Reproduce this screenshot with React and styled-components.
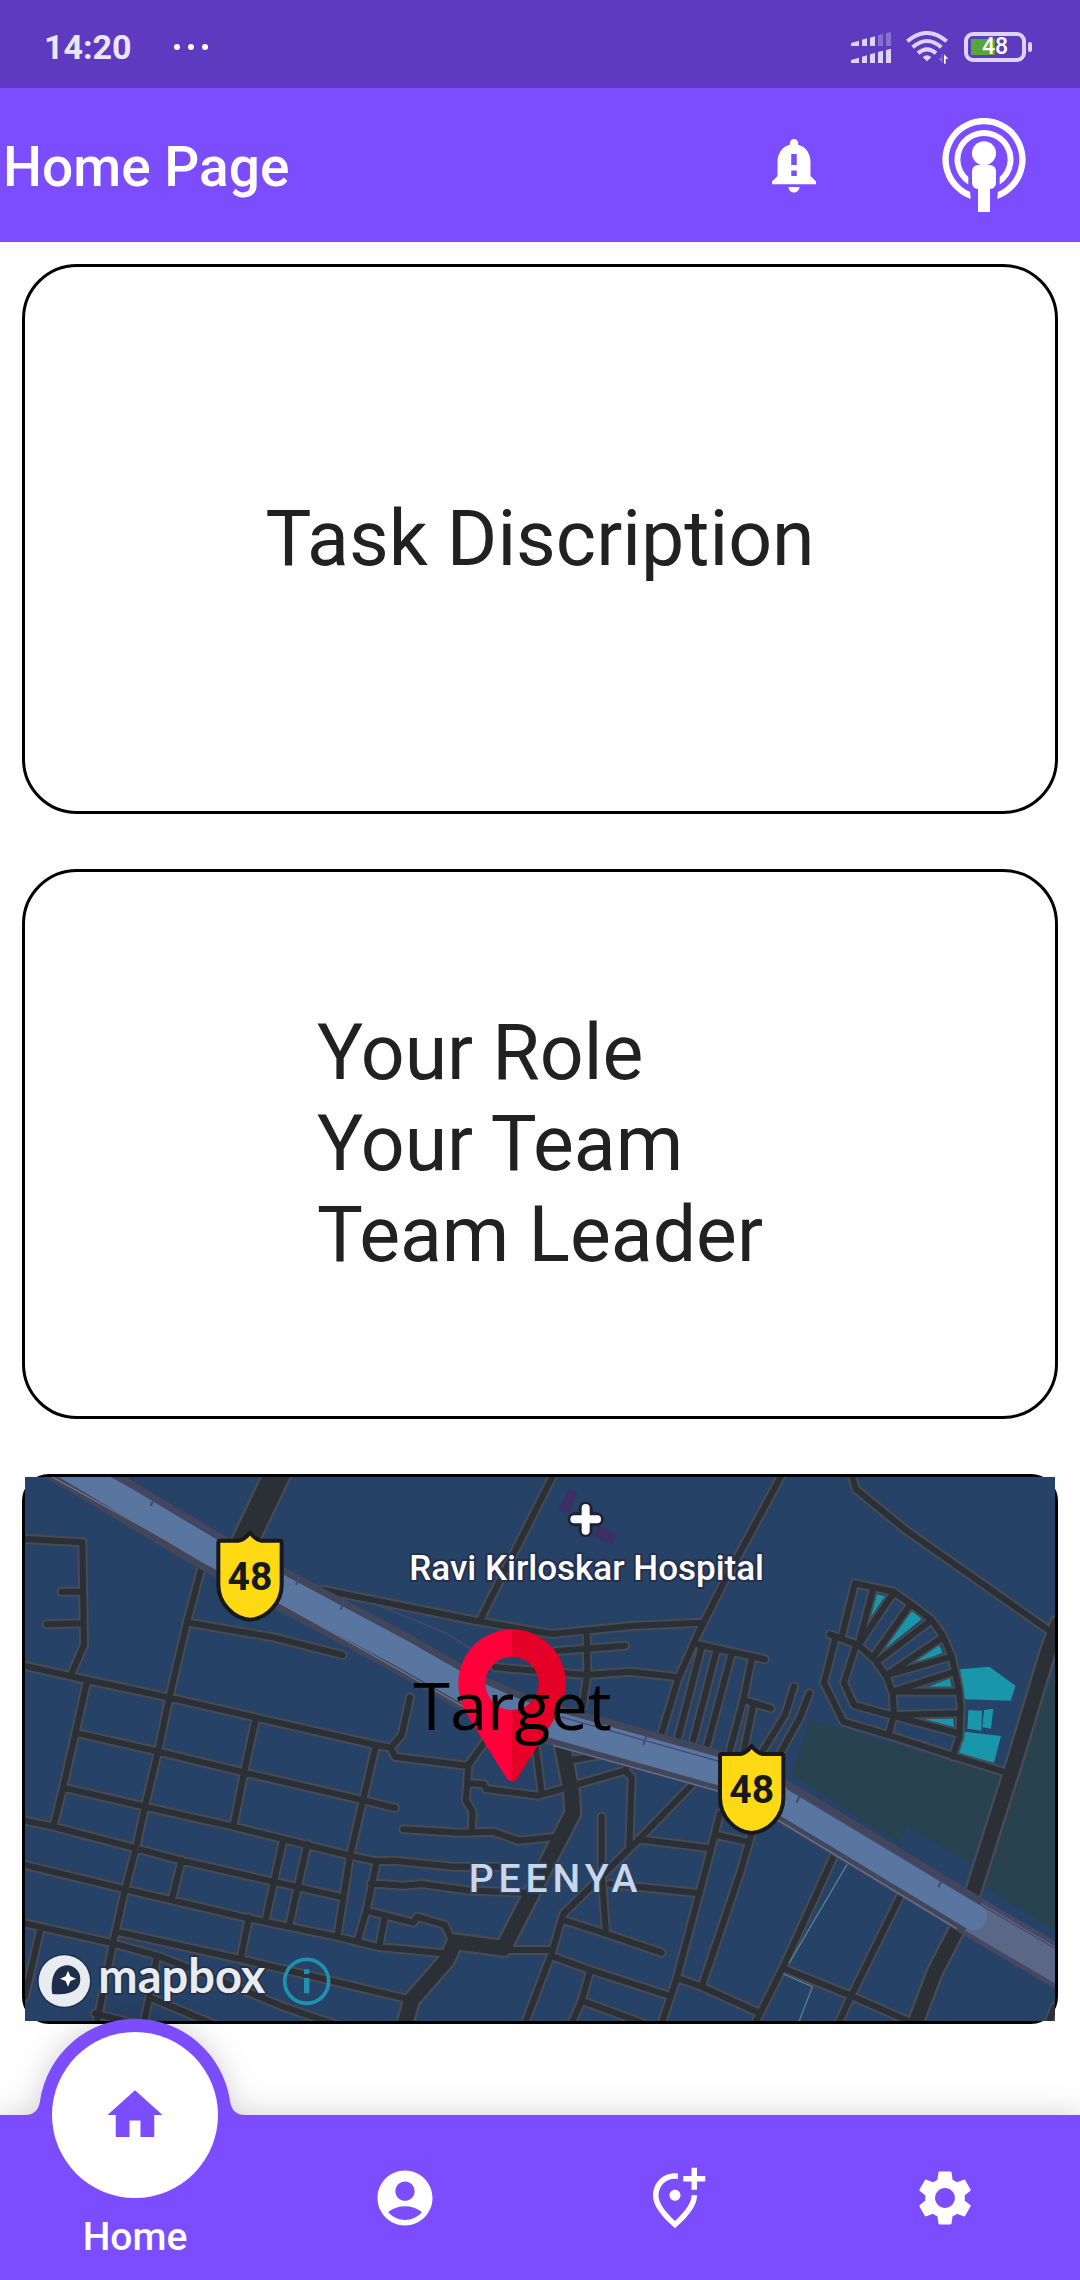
import React from "react";
import styled, { createGlobalStyle } from "styled-components";
import {
  MdHome,
  MdAccountCircle,
  MdOutlineAddLocationAlt,
  MdSettings,
  MdNotificationImportant,
} from "react-icons/md";

const PURPLE = "#7c4dff";

const GlobalStyle = createGlobalStyle`
  * { box-sizing: border-box; }
  body {
    margin: 0;
    background: #fefefe;
    font-family: Roboto, "Noto Sans", sans-serif;
    color: #212121;
  }
`;

const Screen = styled.div`
  min-height: 100vh;
  display: flex;
  flex-direction: column;
`;

const StatusBar = styled.div`
  height: 88px;
  padding: 6px 48px 0 44px;
  display: flex;
  align-items: center;
  justify-content: space-between;
  background: #5d3abf;
  color: #ece6fb;
`;

const StatusGroup = styled.div`
  display: flex;
  align-items: center;
  gap: ${(p) => p.$gap}px;
`;

const Clock = styled.span`
  font-size: 34px;
  font-weight: 700;
  line-height: 40px;
`;

const Battery = styled.div`
  display: flex;
  align-items: center;
  gap: 2px;
`;

const BatteryBody = styled.div`
  width: 62px;
  height: 30px;
  border: 4px solid #ddd3f5;
  border-radius: 9px;
  display: flex;
  align-items: center;
  justify-content: center;
  font-size: 23px;
  font-weight: 500;
  line-height: 22px;
  color: #fff;
  background: linear-gradient(#57a639, #57a639) 3px 3px / 24px 16px no-repeat;
`;

const BatteryTip = styled.div`
  width: 4px;
  height: 10px;
  border-radius: 2px;
  background: #ddd3f5;
`;

const AppBar = styled.header`
  height: 154px;
  padding: 0 54px 0 3px;
  display: flex;
  align-items: center;
  justify-content: space-between;
  background: ${PURPLE};
  color: #fff;
`;

const Title = styled.h1`
  margin: 0;
  padding-top: 4px;
  font-size: 55px;
  font-weight: 500;
  line-height: 64px;
`;

const Actions = styled.div`
  display: flex;
  align-items: center;
  gap: 115px;
`;

const IconButton = styled.button`
  display: flex;
  padding: 0;
  border: 0;
  background: none;
  color: inherit;
`;

const Main = styled.main`
  display: flex;
  flex-direction: column;
  gap: 55px;
  padding: 22px;
`;

const Card = styled.section`
  height: 550px;
  border: 3px solid #000;
  border-radius: ${(p) => p.$radius || 55}px;
  display: flex;
  align-items: center;
  justify-content: center;
`;

const CardText = styled.div`
  font-size: 77px;
  line-height: 91px;
`;

const MapSvg = styled.svg`
  display: block;
  width: 100%;
  height: 100%;
`;

const MapLabel = styled.text`
  paint-order: stroke;
  stroke-linejoin: round;
`;

const NavBar = styled.nav`
  margin-top: auto;
  height: 165px;
  display: grid;
  grid-template-columns: repeat(4, 1fr);
  background: ${PURPLE};
  filter: drop-shadow(0 0 14px rgba(0, 0, 0, 0.18));
`;

const NavItem = styled.a`
  position: relative;
  display: flex;
  flex-direction: column;
  align-items: center;
  justify-content: ${(p) => (p.$active ? "flex-start" : "center")};
  color: #fff;
  font-size: 39px;
  font-weight: 500;
  line-height: 46px;
  text-decoration: none;
`;

const Bump = styled.svg`
  position: absolute;
  bottom: 100%;
  left: 50%;
  transform: translateX(-50%);
`;

const ActiveDisc = styled.span`
  position: relative;
  width: 166px;
  height: 166px;
  margin: -83px 0 16px;
  flex: none;
  display: flex;
  align-items: center;
  justify-content: center;
  border-radius: 50%;
  background: #fff;
  color: ${PURPLE};
`;

function SignalIcon() {
  return (
    <svg width="40" height="31" viewBox="0 0 120 93" fill="#ddd3f5" aria-hidden="true">
      <path d="M0 33l24-7v16H0zM33 23l15-4v23H33zM57 17l15-4v29H57z" />
      <path d="M81 10l15-4v36H81zM105 4l15-4v42h-15z" opacity=".35" />
      <path d="M0 84l24-7v16H0zM33 74l15-4v23H33zM57 67l15-4v30H57zM81 60l15-4v37H81zM105 54l15-4v43h-15z" />
    </svg>
  );
}

function WifiIcon() {
  return (
    <svg width="43" height="33" viewBox="0 0 129 99" fill="none" aria-hidden="true">
      <g stroke="#ddd3f5" strokeWidth="12">
        <path d="M4 31Q63-19 122 31" />
        <path d="M20 49Q63 11 106 49" />
        <path d="M36 67Q63 43 90 67" />
      </g>
      <path d="M63 91L50 79Q63 67 76 79z" fill="#ddd3f5" />
      <path d="M106 70h4v26l-14-14h10z" fill="#ddd3f5" opacity=".35" />
      <path d="M114 98V70l13 13h-8v15z" fill="#fff" />
    </svg>
  );
}

function PodcastIcon() {
  return (
    <svg width="84" height="94" viewBox="-42 -41.5 84 94" fill="#fff" aria-hidden="true">
      <path d="M-13.3 39.4A41.6 41.6 0 1 1 13.3 39.4L13.9 32.4A35.3 35.3 0 1 0-13.9 32.4Z" />
      <path d="M-15.7 25A29.5 29.5 0 1 1 15.7 25V17.6A23.6 23.6 0 1 0-15.7 17.6Z" />
      <circle cy="-6.3" r="12" />
      <rect x="-12" y="5.5" width="24" height="24" rx="6" />
      <rect x="-6" y="20" width="12" height="32.5" />
    </svg>
  );
}

const streets = [
  "M75 237L247 247L252 555L215 640M185 395H247M140 493L250 490",
  "M75 618L262 660L508 713L768 773L1128 855L1172 863L1205 825L1230 712M1172 863L1185 890L1405 918",
  "M262 660L190 980L160 1100M608 310L560 490L508 713L475 870L435 1040L408 1165L375 1290L340 1445L290 1690",
  "M565 488L820 532L1028 585M235 820L475 875L735 938L1095 1022L1185 1044M768 773L740 900L700 1100",
  "M190 983L435 1040L700 1100L850 1137L920 1155L1050 1187L1130 1204L1185 1202L1360 1220L1520 1220",
  "M75 1082L160 1100L408 1165L545 1202L820 1265L1030 1312",
  "M75 1215L375 1288L520 1322L745 1375L1010 1430L1130 1460L1330 1480",
  "M75 1390L340 1450L480 1490L620 1545L850 1640L1010 1695M350 1415L720 1497L1215 1615",
  "M545 1200L515 1320M747 1372L722 1495M850 1137L797 1380M922 1152L868 1395M1128 855L1050 1187L1012 1430",
  "M1130 1204L1100 1350L1073 1442M1113 1270L1210 1277L1265 1272L1410 1292L1580 1298",
  "M1100 1352L1240 1388L1252 1370L1335 1395L1355 1440M1155 1370L1138 1458",
  "M122 1402L75 1610M470 1495L432 1690M285 1660L400 1690M448 1612L660 1700",
  "M1210 1108L1380 1118L1480 1115L1555 1142L1670 1130",
  "M1455 845L1405 915L1398 1022L1418 1055L1415 1115",
  "M1405 970L1452 973L1458 987L1615 1007L1690 985L1875 932L1890 900M1605 840L1625 1000M1715 900L1840 880",
  "M1875 932L1895 952L1888 1160M2090 960L1915 1140L1690 1362L1655 1480L1575 1690",
  "M1805 1070V1240L1818 1420M1915 1138L2130 1165M1830 1272L2100 1300",
  "M1690 1380L1815 1420L1985 1478M1500 1470H1655M1660 1490L1770 1530L2010 1608",
  "M1770 1535L1745 1622L1715 1690M1745 1622L1930 1690M2160 1060L2130 1180L2030 1555L1985 1690",
  "M2150 1125L2240 1145M2255 1120L2220 1240L2105 1580M2035 1555L2105 1580L2280 1660",
  "M2505 1180L2350 1520L2265 1690M2705 1300L2555 1605L2515 1690M2350 1525L2555 1608L2740 1690M3165 1640L3145 1690",
  "M970 390L1080 412L1430 483L1655 522L1895 498L2105 488M1660 45L1440 480",
  "M2345 45L2165 380L2090 530L2035 655L1985 820M1760 520L1762 640L1748 740",
  "M1670 573L1875 557M1485 622L1760 645L1890 635L2035 652M2090 552L2295 598",
  "M2105 560L2035 830M2150 570L2080 840M2195 580L2122 855M2255 598L2230 720L2190 870",
  "M2232 720L2312 745M2260 735L2230 880M2382 680L2355 765L2290 870M2428 700L2400 772L2335 890",
  "M2555 45L2568 88L2720 212L3145 510",
  "M2525 530L2565 370L2680 395L2730 430L2795 480L2830 530L2855 590L2875 680L2882 740L2878 830L2858 890",
  "M2490 523L2575 555L2625 600L2660 650L2678 700L2682 765L2665 825",
  "M2505 540L2472 668L2530 785L2665 825L2860 888L3010 935",
  "M2565 565L2532 668L2562 735L2682 768L2875 820",
  "M2620 385L2575 555L2680 400M2730 435L2620 590M2795 480L2630 605M2830 530L2660 645L2855 590M2865 635L2678 695H2875M2880 760L2682 765",
];

const majorRoads = [
  { d: "M1680 820L1715 1000L1718 1060L1510 1465L1365 1445L1340 1500L1235 1620L1212 1700", w: 44 },
  { d: "M3175 490L3145 570L3045 900L2915 1310", w: 42 },
  { d: "M2885 1380L2805 1535L2742 1700", w: 42 },
  { d: "M835 35L725 265", w: 74 },
];

const highway =
  "M150 -12L258 52L620 268L1200 577L1380 680Q1520 755 1680 800L2160 935Q2260 965 2350 1025L2920 1370";

const SHIELD =
  "M5 28H62Q80 24 95 4Q110 24 128 28H185Q190 28 190 34V160C190 215 145 262 95 265C45 262 0 215 0 160V34Q0 28 5 28Z";

function Shield({ x, y }) {
  return (
    <g transform={`translate(${x} ${y})`}>
      <path d={SHIELD} fill="#ffd914" stroke="#17191d" strokeWidth="12" strokeLinejoin="round" />
      <text x="95" y="175" textAnchor="middle" fontSize="117" fontWeight="700" fill="#17191d">
        48
      </text>
    </g>
  );
}

/* Map units are a third of a pixel at the widest layout. */
function TargetMap() {
  return (
    <MapSvg viewBox="75 51 3090 1632" preserveAspectRatio="xMidYMid slice" role="img" aria-label="Target map">
      <rect x="0" y="0" width="3300" height="1800" fill="#274267" />
      <g fill="#29424f">
        <path d="M2430 778L3010 950L2910 1210L2722 1102L2697 1150L2375 945Z" />
        <path d="M3175 600L3060 900L2945 1278L3175 1416Z" />
      </g>
      <path
        d="M1705 88L1675 150L1705 165L1732 100ZM1795 195L1852 225L1835 255L1775 225Z"
        fill="#3b2f64"
      />
      <g fill="#1996a9">
        <path d="M2630 403L2656 408L2610 475ZM2735 450L2765 478L2635 582ZM2815 550L2828 578L2735 615ZM2850 655L2855 680L2785 680ZM2860 775L2862 802L2770 778Z" />
        <path d="M2880 628L2968 620L3047 677L3032 722L2893 718ZM2905 750L2946 752L2944 812L2902 806ZM2952 750L2980 746L2973 806L2947 802ZM2893 815L3003 828L2982 908L2873 880Z" />
      </g>
      <g fill="none" strokeLinejoin="round" strokeLinecap="round">
        <path d={streets.join("")} stroke="#474b53" strokeWidth="30" />
        {majorRoads.map((r) => (
          <path key={r.d} d={r.d} stroke="#474b53" strokeWidth={r.w + 14} />
        ))}
        <path d={streets.join("")} stroke="#2b2f36" strokeWidth="18" />
        {majorRoads.map((r) => (
          <path key={r.d} d={r.d} stroke="#2b2f36" strokeWidth={r.w} />
        ))}
      </g>
      <path d="M2543 1210L2367 1510M2350 1542L2437 1580L2395 1690" fill="none" stroke="#55808f" strokeWidth="4" />
      <g fill="none">
        <path d="M2905 1362L3200 1535" stroke="#454860" strokeWidth="124" />
        <path d="M2905 1362L3200 1535" stroke="#5b6786" strokeWidth="96" />
        <path d={highway} stroke="#42465a" strokeWidth="124" strokeLinejoin="round" />
        <path d={highway} stroke="#5876a0" strokeWidth="82" strokeLinejoin="round" strokeLinecap="round" />
        <path d="M110 25L640 318L1200 631L1400 746M1660 856L2180 1000L2340 1084L2870 1406" stroke="#66738f" strokeWidth="4" />
        <path d="M330 48L665 230M1680 770L2160 905M2360 985L2900 1310L3165 1465M1120 430L1340 520L1480 610" stroke="#454872" strokeWidth="4" />
        <path d="M465 110L452 138M900 345L888 375M1035 415L1022 450M1940 825L1930 855M2400 1005L2390 1028M2825 1260L2815 1282" stroke="#454872" strokeWidth="6" />
      </g>
      <Shield x={655} y={214} />
      <Shield x={2160} y={854} />
      <path
        d="M1757 146V210M1724 178H1790"
        stroke="#1d2233"
        strokeWidth="42"
        strokeLinecap="round"
      />
      <path d="M1757 144V212M1723 178H1791" stroke="#fff" strokeWidth="24" strokeLinecap="round" />
      <MapLabel x="1760" y="360" textAnchor="middle" fontSize="105" fontWeight="500" fill="#fff" stroke="#22304f" strokeWidth="12">
        Ravi Kirloskar Hospital
      </MapLabel>
      <MapLabel x="1406" y="1296" fontSize="117" fontWeight="500" letterSpacing="15" fill="#cad7e8" stroke="#274267" strokeWidth="10">
        PEENYA
      </MapLabel>
      <path d="M1536 508A161 161 0 0 0 1375 669C1375 730 1400 760 1420 795L1520 955Q1528 964 1536 964V750A80 80 0 0 1 1536 590Z" fill="#ff003a" />
      <path d="M1536 508A161 161 0 0 1 1697 669C1697 730 1672 760 1652 795L1552 955Q1544 964 1536 964V750A80 80 0 0 0 1536 590Z" fill="#e50027" />
      <text x="1240" y="810" fontSize="200" fontFamily="'Open Sans', 'Noto Sans', sans-serif" fill="#000">
        Target
      </text>
      <circle cx="193" cy="1563" r="82" fill="#1d2c47" opacity=".7" />
      <circle cx="193" cy="1563" r="77" fill="#e8ecf0" />
      <path d="M157 1602C152 1565 158 1518 202 1516A41 41 0 0 1 241 1557C241 1598 198 1606 157 1602Z" fill="#1c2e49" />
      <path d="M204 1532L211 1549L228 1556L211 1563L204 1580L197 1563L180 1556L197 1549Z" fill="#fff" />
      <MapLabel x="295" y="1598" fontSize="141" fontWeight="700" fontFamily="Lato, sans-serif" fill="#e8ecf0" stroke="#22304a" strokeWidth="10">
        mapbox
      </MapLabel>
      <circle cx="920" cy="1564" r="66" fill="none" stroke="#2090af" strokeWidth="11" />
      <path d="M912 1528h16v14h-16zM912 1554h16v46h-16z" fill="#2090af" />
    </MapSvg>
  );
}

export default function App() {
  return (
    <Screen>
      <GlobalStyle />
      <StatusBar>
        <StatusGroup $gap={42}>
          <Clock>14:20</Clock>
          <svg width="34" height="6" viewBox="0 0 34 6" fill="#fff" aria-hidden="true">
            <circle cx="3" cy="3" r="3" />
            <circle cx="17" cy="3" r="3" />
            <circle cx="31" cy="3" r="3" />
          </svg>
        </StatusGroup>
        <StatusGroup $gap={15}>
          <SignalIcon />
          <WifiIcon />
          <Battery>
            <BatteryBody>48</BatteryBody>
            <BatteryTip />
          </Battery>
        </StatusGroup>
      </StatusBar>
      <AppBar>
        <Title>Home Page</Title>
        <Actions>
          <IconButton type="button" aria-label="Alerts">
            <MdNotificationImportant size={66} />
          </IconButton>
          <IconButton type="button" aria-label="Broadcast">
            <PodcastIcon />
          </IconButton>
        </Actions>
      </AppBar>
      <Main>
        <Card>
          <CardText>Task Discription</CardText>
        </Card>
        <Card>
          <CardText>
            <div>Your Role</div>
            <div>Your Team</div>
            <div>Team Leader</div>
          </CardText>
        </Card>
        <Card $radius={27}>
          <TargetMap />
        </Card>
      </Main>
      <NavBar>
        <NavItem href="#home" $active aria-current="page">
          <Bump width="220" height="97" viewBox="-110 -97 220 97" fill={PURPLE} aria-hidden="true">
            <path d="M-110 0Q-97 0-95-14A96 96 0 0 1 95-14Q97 0 110 0V1H-110Z" />
          </Bump>
          <ActiveDisc>
            <MdHome size={66} />
          </ActiveDisc>
          Home
        </NavItem>
        <NavItem href="#profile" aria-label="Profile">
          <MdAccountCircle size={66} />
        </NavItem>
        <NavItem href="#add-location" aria-label="Add location">
          <MdOutlineAddLocationAlt size={66} />
        </NavItem>
        <NavItem href="#settings" aria-label="Settings">
          <MdSettings size={66} />
        </NavItem>
      </NavBar>
    </Screen>
  );
}
